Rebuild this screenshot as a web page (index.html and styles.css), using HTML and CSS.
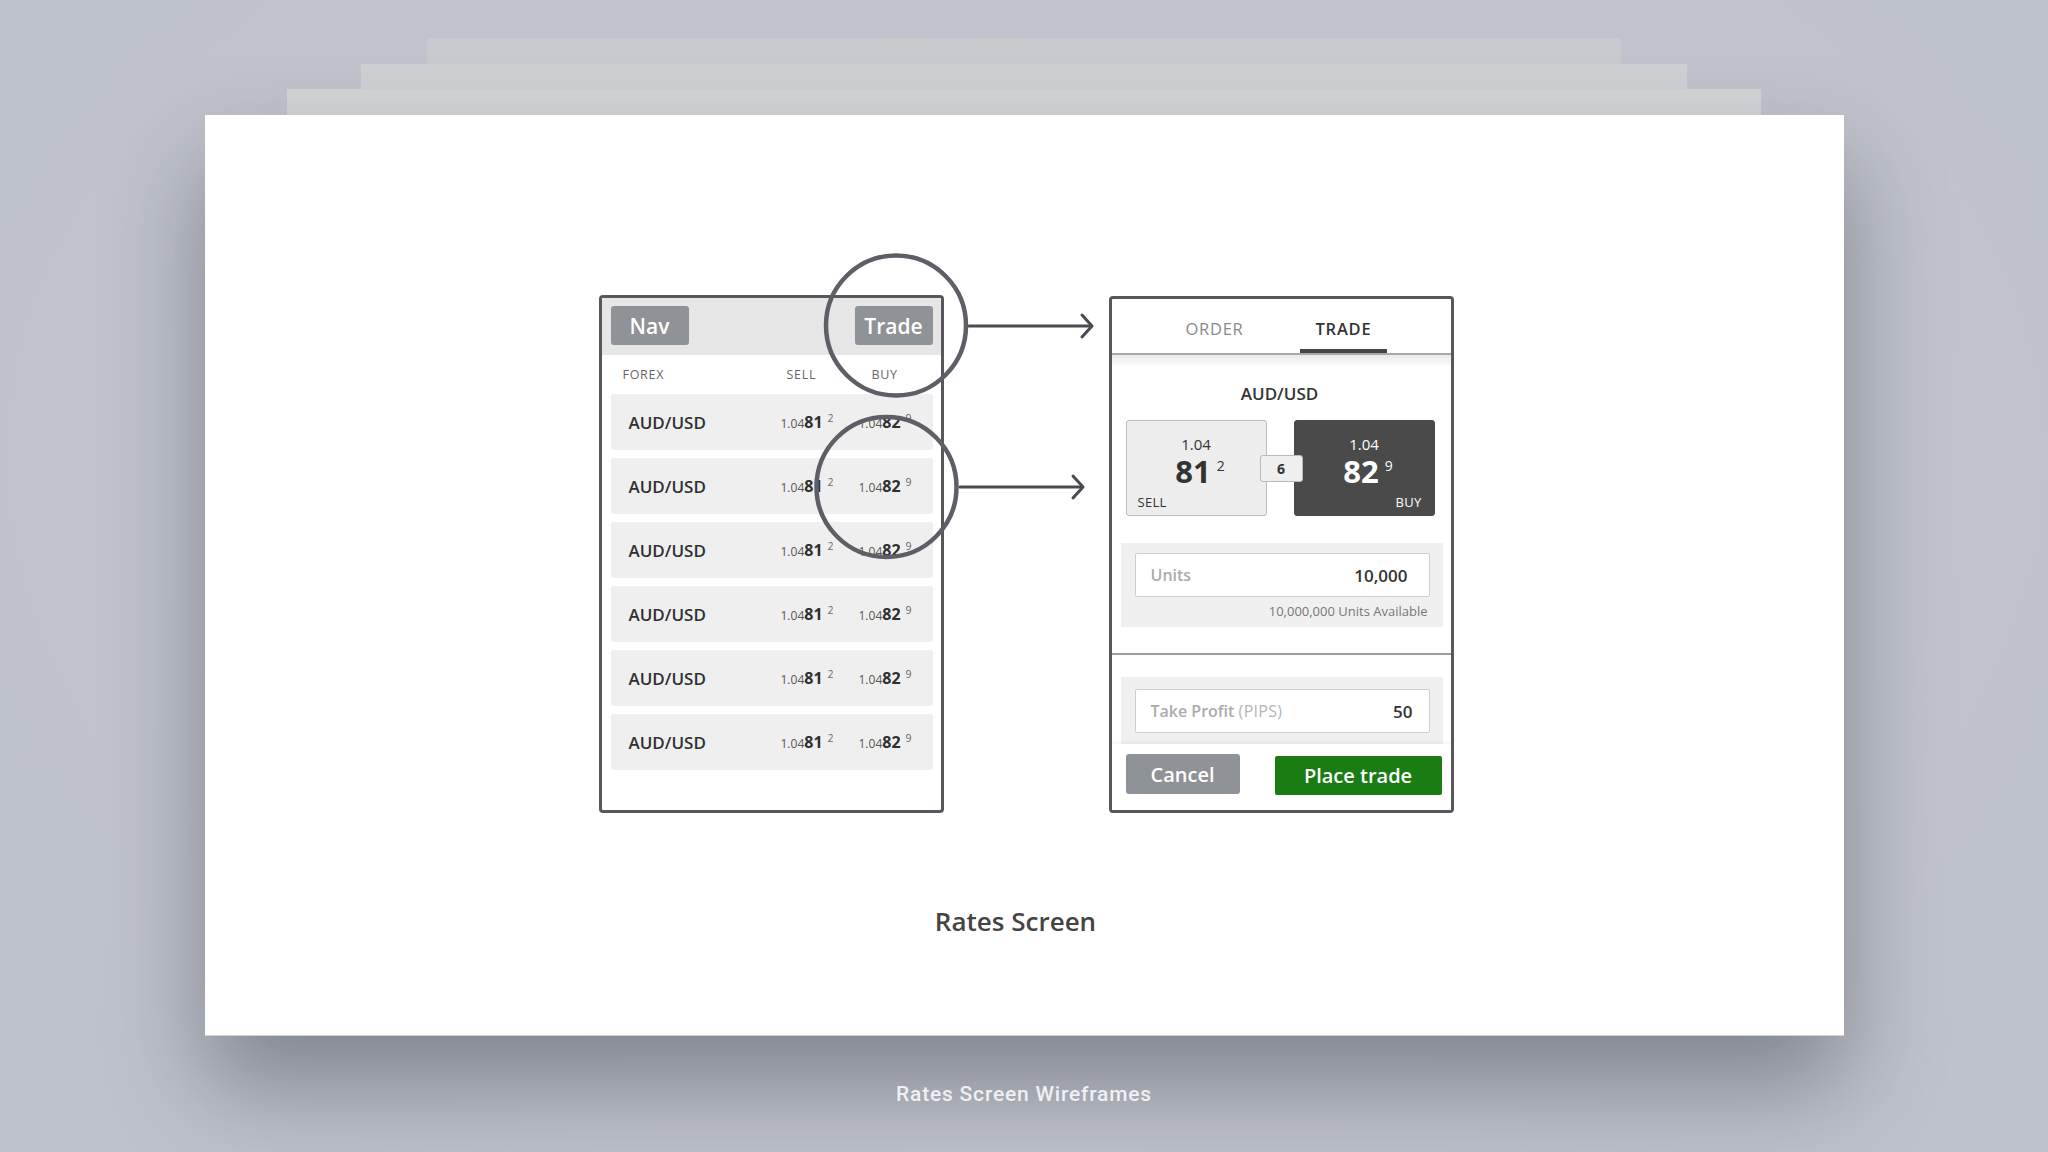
FILE: index.html
```html
<!DOCTYPE html>
<html>
<head>
<meta charset="utf-8">
<title>Rates Screen Wireframes</title>
<link rel="stylesheet" href="styles.css">
</head>
<body>
<div class="stage">
  <div class="layer layer1"></div>
  <div class="layer layer2"></div>
  <div class="layer layer3"></div>
  <div class="card">
    <div class="phones">
      <div class="phone rates">
        <div class="rates-head">
          <div class="btn-gray nav">Nav</div>
          <div class="btn-gray trade-btn">Trade</div>
        </div>
        <div class="col-head">
          <span class="ch-forex">FOREX</span>
          <span class="ch-sell">SELL</span>
          <span class="ch-buy">BUY</span>
        </div>
        <div class="rows">
          <div class="row"><span class="pair">AUD/USD</span><span class="price sell"><span class="pre">1.04</span><b>81</b><sup>2</sup></span><span class="price buy"><span class="pre">1.04</span><b>82</b><sup>9</sup></span></div>
          <div class="row"><span class="pair">AUD/USD</span><span class="price sell"><span class="pre">1.04</span><b>81</b><sup>2</sup></span><span class="price buy"><span class="pre">1.04</span><b>82</b><sup>9</sup></span></div>
          <div class="row"><span class="pair">AUD/USD</span><span class="price sell"><span class="pre">1.04</span><b>81</b><sup>2</sup></span><span class="price buy"><span class="pre">1.04</span><b>82</b><sup>9</sup></span></div>
          <div class="row"><span class="pair">AUD/USD</span><span class="price sell"><span class="pre">1.04</span><b>81</b><sup>2</sup></span><span class="price buy"><span class="pre">1.04</span><b>82</b><sup>9</sup></span></div>
          <div class="row"><span class="pair">AUD/USD</span><span class="price sell"><span class="pre">1.04</span><b>81</b><sup>2</sup></span><span class="price buy"><span class="pre">1.04</span><b>82</b><sup>9</sup></span></div>
          <div class="row"><span class="pair">AUD/USD</span><span class="price sell"><span class="pre">1.04</span><b>81</b><sup>2</sup></span><span class="price buy"><span class="pre">1.04</span><b>82</b><sup>9</sup></span></div>
        </div>
      </div>

      <div class="phone tradeview">
        <div class="tabs">
          <div class="tab">ORDER</div>
          <div class="tab active">TRADE</div>
        </div>
        <div class="tbody">
          <div class="t-pair">AUD/USD</div>
          <div class="quotes">
            <div class="qbox qsell">
              <div class="q-pre">1.04</div>
              <div class="q-big">81<sup>2</sup></div>
              <div class="q-label">SELL</div>
            </div>
            <div class="qbox qbuy">
              <div class="q-pre">1.04</div>
              <div class="q-big">82<sup>9</sup></div>
              <div class="q-label">BUY</div>
            </div>
            <div class="spread">6</div>
          </div>
          <div class="field-group units-group">
            <div class="field">
              <span class="f-label">Units</span>
              <span class="f-value">10,000</span>
            </div>
            <div class="avail">10,000,000 Units Available</div>
          </div>
          <div class="divider"></div>
          <div class="field-group tp-group">
            <div class="field">
              <span class="f-label">Take Profit <span class="f-unit">(PIPS)</span></span>
              <span class="f-value">50</span>
            </div>
          </div>
        </div>
        <div class="tfoot">
          <div class="btn-cancel">Cancel</div>
          <div class="btn-place">Place trade</div>
        </div>
      </div>
    </div>
    <div class="title">Rates Screen</div>

    <svg class="overlay" width="1639" height="921" viewBox="0 0 1639 921" xmlns="http://www.w3.org/2000/svg">
      <circle cx="691" cy="210.5" r="70" fill="none" stroke="#5f5e66" stroke-width="4.5"/>
      <circle cx="681.5" cy="372" r="70" fill="none" stroke="#5f5e66" stroke-width="4.5"/>
      <g fill="none" stroke="#4a4a50" stroke-width="3" stroke-linecap="round" stroke-linejoin="round">
        <path d="M764 211 H886"/>
        <path d="M877 200 L887 211 L877 222"/>
        <path d="M755 372 H877"/>
        <path d="M868 361 L878 372 L868 383"/>
      </g>
    </svg>
  </div>
  <div class="caption">Rates Screen Wireframes</div>
</div>
</body>
</html>
```

FILE: styles.css
```css
html, body {
  margin: 0;
  padding: 0;
}
body {
  width: 2048px;
  height: 1152px;
  overflow: hidden;
  background: radial-gradient(ellipse at 50% 40%, #c3c6cd 0%, #c0c3cb 60%, #bec2ca 100%);
  font-family: "Open Sans", "Liberation Sans", sans-serif;
  color: #333;
}
.stage {
  display: flex;
  flex-direction: column;
  align-items: center;
  padding-top: 38px;
}
.layer {
  flex: none;
}
.layer1 {
  width: 1194px;
  height: 26px;
  background: #c7cacf;
}
.layer2 {
  width: 1326px;
  height: 25px;
  background: #cdd0d3;
}
.layer3 {
  width: 1474px;
  height: 26px;
  background: #d2d5d7;
}
.card {
  position: relative;
  width: 1639px;
  height: 921px;
  box-sizing: border-box;
  background: #fff;
  border-bottom: 1px solid #d4d4d4;
  padding-top: 180px;
  box-shadow: 0 50px 90px rgba(20, 25, 35, 0.36);
}
.phones {
  display: flex;
  justify-content: center;
  align-items: flex-start;
  gap: 165px;
  margin-left: 4px;
}
.phone {
  width: 345px;
  height: 518px;
  box-sizing: border-box;
  border: 3px solid #57575d;
  border-radius: 4px;
  background: #fff;
  overflow: hidden;
  display: flex;
  flex-direction: column;
}
.tradeview {
  margin-top: 1px;
  height: 517px;
}

/* ---------- rates list ---------- */
.rates-head {
  display: flex;
  justify-content: space-between;
  background: #e6e6e6;
  padding: 8px 8px 10px 9px;
}
.btn-gray {
  width: 78px;
  height: 39px;
  border-radius: 3px;
  background: #8f9296;
  color: #fff;
  font-size: 21px;
  font-weight: 600;
  display: flex;
  align-items: center;
  justify-content: center;
}
.col-head {
  height: 39px;
  display: flex;
  align-items: center;
  padding-left: 21px;
  font-size: 12.5px;
  color: #666;
  letter-spacing: 0.7px;
}
.ch-forex { width: 164px; }
.ch-sell { width: 85px; }
.rows {
  display: flex;
  flex-direction: column;
  gap: 8px;
  padding: 0 8px 0 9px;
}
.row {
  height: 56px;
  border-radius: 3px;
  background: #efefef;
  display: flex;
  align-items: center;
  padding-left: 18px;
}
.pair {
  width: 152px;
  font-size: 17px;
  font-weight: 600;
  color: #2f2f2f;
}
.price {
  white-space: nowrap;
}
.price.sell { width: 78px; }
.price .pre {
  font-size: 12px;
  color: #555;
}
.price b {
  font-size: 16px;
  font-weight: 700;
  color: #2f2f2f;
}
.price sup {
  font-size: 10.5px;
  color: #666;
  margin-left: 5px;
  vertical-align: 6px;
  line-height: 0;
}

/* ---------- trade view ---------- */
.tabs {
  flex: none;
  display: flex;
  justify-content: center;
  gap: 42px;
  border-bottom: 2px solid #a8a8a8;
  padding-right: 4px;
}
.tab {
  width: 87px;
  height: 54px;
  box-sizing: border-box;
  padding-top: 19px;
  line-height: 22px;
  text-align: center;
  font-size: 16.5px;
  color: #8a8a8a;
  letter-spacing: 0.7px;
  white-space: nowrap;
}
.tab.active {
  color: #333;
  font-weight: 600;
  letter-spacing: 0.8px;
  border-bottom: 4px solid #454545;
}
.tbody {
  flex: 1;
  overflow: hidden;
  background: linear-gradient(#e9e9e9 0px, #f4f4f4 6px, #fff 12px);
}
.t-pair {
  padding-top: 28px;
  line-height: 22px;
  text-align: center;
  font-size: 17px;
  font-weight: 600;
  color: #333;
  padding-right: 3px;
}
.quotes {
  position: relative;
  display: flex;
  gap: 27px;
  margin-top: 15px;
  padding-left: 14px;
}
.qbox {
  width: 141px;
  height: 96px;
  box-sizing: border-box;
  border-radius: 3px;
  padding-top: 13px;
  display: flex;
  flex-direction: column;
  align-items: center;
}
.qsell {
  background: #ededed;
  border: 1px solid #bdbdbd;
  color: #333;
}
.qbuy {
  background: #4a4a4a;
  border: 1px solid #4a4a4a;
  color: #fff;
}
.q-pre {
  line-height: 20px;
  font-size: 15px;
}
.q-big {
  line-height: 34px;
  font-size: 31px;
  font-weight: 700;
  padding-left: 8px;
}
.q-big sup {
  font-size: 14px;
  font-weight: 400;
  margin-left: 6px;
  vertical-align: 12px;
  line-height: 0;
}
.q-label {
  align-self: stretch;
  margin-top: 6px;
  line-height: 16px;
  font-size: 13px;
  letter-spacing: 0.3px;
}
.qsell .q-label { padding-left: 11px; }
.qbuy .q-label { text-align: right; padding-right: 12px; }
.spread {
  position: absolute;
  left: 148px;
  top: 35px;
  width: 43px;
  height: 27px;
  box-sizing: border-box;
  border: 1px solid #b9b9b9;
  border-radius: 3px;
  background: #efefef;
  font-size: 14px;
  font-weight: 700;
  color: #333;
  display: flex;
  align-items: center;
  justify-content: center;
}
.field-group {
  background: #f0f0f0;
  margin: 0 8px 0 9px;
  padding: 10px 13px 8px 14px;
}
.units-group { margin-top: 27px; }
.field {
  height: 44px;
  box-sizing: border-box;
  background: #fff;
  border: 1px solid #cfcfcf;
  border-radius: 2px;
  display: flex;
  align-items: center;
  justify-content: space-between;
  padding: 0 21px 0 15px;
}
.f-label {
  font-size: 16px;
  font-weight: 600;
  color: #ababab;
}
.f-unit {
  font-weight: 400;
  color: #b5b5b5;
  letter-spacing: 0.3px;
}
.f-value {
  font-size: 17px;
  font-weight: 600;
  color: #333;
}
.avail {
  margin-top: 6px;
  line-height: 16px;
  text-align: right;
  font-size: 13px;
  color: #777;
  padding-right: 2px;
}
.divider {
  height: 2px;
  background: #9c9c9c;
  margin-top: 26px;
}
.tp-group {
  margin-top: 22px;
  padding-top: 12px;
  padding-bottom: 30px;
}
.tp-group .field { padding-right: 16px; }
.tfoot {
  flex: none;
  height: 66px;
  box-sizing: border-box;
  background: #fff;
  padding: 10px 9px 0 14px;
  display: flex;
  justify-content: space-between;
  align-items: flex-start;
  box-shadow: 0 -2px 3px rgba(0, 0, 0, 0.05);
  position: relative;
}
.btn-cancel {
  width: 114px;
  height: 40px;
  border-radius: 3px;
  background: #8f9296;
  color: #fff;
  font-size: 20px;
  font-weight: 600;
  display: flex;
  align-items: center;
  justify-content: center;
}
.btn-place {
  margin-top: 2px;
  width: 167px;
  height: 39px;
  border-radius: 2px;
  background: #1a7d13;
  color: #fff;
  font-size: 20px;
  font-weight: 600;
  display: flex;
  align-items: center;
  justify-content: center;
}

/* ---------- captions ---------- */
.title {
  margin-top: 93px;
  line-height: 30px;
  text-align: center;
  font-size: 26px;
  font-weight: 600;
  color: #444;
  padding-right: 17px;
}
.overlay {
  position: absolute;
  left: 0;
  top: 0;
  pointer-events: none;
}
.caption {
  position: relative;
  z-index: 1;
  margin-top: 45px;
  line-height: 26px;
  font-family: "Roboto", "Liberation Sans", sans-serif;
  font-size: 21px;
  font-weight: 500;
  letter-spacing: 0.8px;
  color: #eef0f2;
}
```
